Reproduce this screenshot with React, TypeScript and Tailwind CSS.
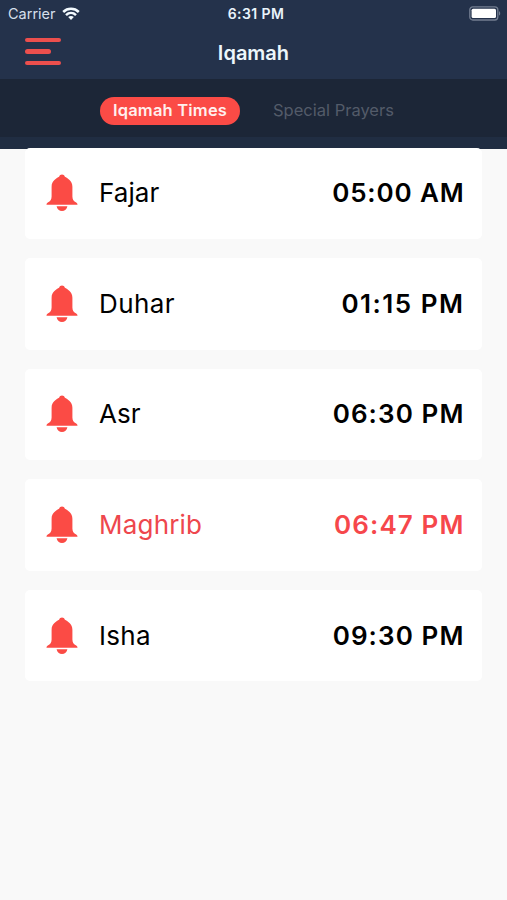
import React from 'react';
import clsx from 'clsx';

const PRAYERS = [
  { name: 'Fajar', time: '05:00 AM', nameClass: 'tracking-[0.05px]', timeClass: 'tracking-[0.85px]' },
  { name: 'Duhar', time: '01:15 PM', nameClass: 'tracking-[0.4px]', timeClass: 'tracking-[1.5px]' },
  { name: 'Asr', time: '06:30 PM', nameClass: 'tracking-[0.1px]', timeClass: 'tracking-[1.1px]' },
  { name: 'Maghrib', time: '06:47 PM', nameClass: 'tracking-[0.2px]', timeClass: 'tracking-[1.1px]', active: true },
  { name: 'Isha', time: '09:30 PM', nameClass: 'tracking-[0.3px]', timeClass: 'tracking-[1.1px]' },
];

const WifiIcon = () => (
  <svg className="-mt-[2px]" width="18" height="13" viewBox="0 0 18 13" fill="none" stroke="#f4fbff" strokeWidth="2.5">
    <path d="M1.2 5C5.6.8 12.4.8 16.8 5" />
    <path d="M4 8.1c2.9-2.7 7.1-2.7 10 0" />
    <path d="M9 12.9 6.2 10.1c1.6-1.4 4-1.4 5.6 0Z" fill="#f4fbff" stroke="none" />
  </svg>
);

const BatteryIcon = () => (
  <svg className="-mt-px" width="32" height="15" viewBox="0 0 32 15">
    <rect x="0.8" y="0.8" width="28" height="13.2" rx="3" fill="none" stroke="#737e91" strokeWidth="1.3" />
    <rect x="2.6" y="2.7" width="24.4" height="9.4" rx="1.5" fill="#fff" />
    <path d="M30 5.2c1.6.6 1.6 3.8 0 4.4Z" fill="#737e91" />
  </svg>
);

const BellIcon = () => (
  <svg width="32" height="38" viewBox="0 0 32 38" fill="#fb4b45">
    <path d="M16 .6c-1.4 0-2.4.9-2.9 2.2C10.700 4.200 5.600 6.600 5.600 12.700v9.800c0 3.200-1.300 4.600-3.800 5.900-.9.500-1.300 1.300-1.300 2.300h31c0-1-.4-1.800-1.300-2.300-2.500-1.300-3.800-2.700-3.800-5.900v-9.800c0-6.100-5.100-8.500-7.500-9.900C18.400 1.500 17.400.6 16 .6Z" />
    <path d="M10.600 32.200h10.800c-.5 2.800-2.700 4.800-5.400 4.800s-4.900-2-5.400-4.800Z" />
  </svg>
);

const App = () => {
  return (
    <div className="h-[900px] w-[507px] overflow-hidden bg-[#f9f9f9] font-['Inter',sans-serif] text-black">
      <header className="h-[79px] bg-[#24324b]">
        <div className="grid h-7 grid-cols-3 items-center pl-2 pr-[6px] text-[#e9f4fb]">
          <div className="flex items-center gap-[6px]">
            <span className="text-[14.5px] leading-7 text-[#d5dfeb]">Carrier</span>
            <WifiIcon />
          </div>
          <span className="pl-[3px] text-center text-[14px] font-semibold leading-7 tracking-[0.4px]">6:31 PM</span>
          <div className="flex justify-end">
            <BatteryIcon />
          </div>
        </div>
        <div className="grid h-12 grid-cols-3 items-center pl-[25px] pr-[25px]">
          <button type="button" aria-label="Menu" className="-mt-px flex flex-col gap-[7px]">
            <span className="h-[4.5px] w-9 rounded-full bg-[#ec4f4d]" />
            <span className="h-[4.5px] w-[26px] rounded-full bg-[#ec4f4d]" />
            <span className="h-[4.5px] w-9 rounded-full bg-[#ec4f4d]" />
          </button>
          <h1 className="pt-px text-center text-[20px] font-semibold leading-6 text-[#edf7fc]">Iqamah</h1>
        </div>
      </header>

      <nav className="h-[58px] bg-[#1c2637] pt-[18px]">
        <div className="flex pl-[100px]">
          <button type="button" className="h-7 w-[140px] rounded-full bg-[#fb4b46] pb-[2px] text-[16.5px] font-semibold leading-[26px] tracking-[0.2px] text-[#fff0ee]">
            Iqamah Times
          </button>
          <button type="button" className="ml-[33px] pb-[2px] text-[16.5px] leading-[26px] text-[#535b69]">
            Special Prayers
          </button>
        </div>
      </nav>
      <div className="h-3 bg-[#202d42]" />

      <main className="relative -mt-[1.5px] flex flex-col gap-[19px] px-[25px]">
        {PRAYERS.map((prayer) => (
          <div
            key={prayer.name}
            className="flex h-[91.6px] items-center rounded-[5px] bg-white pl-[21px] pr-[17.5px] text-[26px] leading-8"
          >
            <BellIcon />
            <span className={clsx('ml-[21px]', prayer.nameClass, prayer.active && 'text-[#ee474d]')}>
              {prayer.name}
            </span>
            <span className={clsx('ml-auto font-semibold', prayer.timeClass, prayer.active && 'text-[#f6474b]')}>
              {prayer.time}
            </span>
          </div>
        ))}
      </main>
    </div>
  );
};

export default App;
